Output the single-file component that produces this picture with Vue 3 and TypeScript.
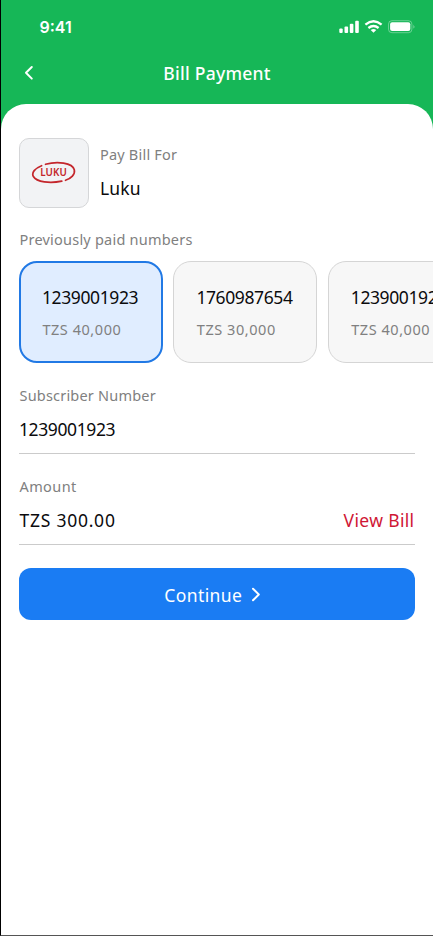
<script setup lang="ts">
interface PaidNumber {
  number: string
  amount: string
}

const paidNumbers: PaidNumber[] = [
  { number: '1239001923', amount: 'TZS 40,000' },
  { number: '1760987654', amount: 'TZS 30,000' },
  { number: '1239001923', amount: 'TZS 40,000' },
]
const selected = 0
</script>

<template>
  <div class="screen">
    <header class="header">
      <div class="status">
        <span class="time">9:41</span>
        <svg class="status-icons" width="78" height="16" viewBox="0 0 78 16" fill="#fff">
          <rect x="0.3" y="9.4" width="3.4" height="4.6" rx="1" />
          <rect x="5.5" y="7.6" width="3.6" height="6.4" rx="1" />
          <rect x="10.8" y="4.8" width="3.6" height="9.2" rx="1" />
          <rect x="16.2" y="1.8" width="3.6" height="12.2" rx="1" />
          <g fill="none" stroke="#fff" stroke-width="2.3">
            <path d="M26.4 5.7Q34.5 -1.1 42.6 5.7" />
            <path d="M29.4 9Q34.5 4.9 39.6 9" />
          </g>
          <path d="M31.7 11Q34.5 9 37.3 11L34.5 13.8Z" />
          <rect x="49.5" y="1.7" width="23.4" height="12" rx="3.4" fill="none" stroke="#fff" stroke-opacity="0.35" />
          <rect x="51.1" y="3.3" width="20.2" height="8.8" rx="2" />
          <path d="M74.5 5.6Q76.3 7.7 74.5 9.8Z" fill-opacity="0.5" />
        </svg>
      </div>
      <div class="nav">
        <svg class="back" width="12" height="16" viewBox="0 0 12 16">
          <path d="M9.8 2L4 7.8L9.8 13.6" fill="none" stroke="#fff" stroke-width="2" stroke-linecap="round" stroke-linejoin="round" />
        </svg>
        <h1 class="title">Bill Payment</h1>
      </div>
    </header>

    <main class="sheet">
      <section class="biller">
        <div class="logo">
          <svg width="46" height="26" viewBox="0 0 46 26">
            <g fill="none" stroke="#c4262c" stroke-width="1.7" stroke-linecap="round">
              <path d="M14.5 4.3C26 1 41.5 2.6 43.3 9.7C44.4 14.4 40 18.5 34.5 20.3" />
              <path d="M10.6 5.7C4 8.3 0.2 12.6 2.4 16.5C5.6 22.2 19 23.6 30.8 21.2" />
            </g>
            <text x="9.3" y="16.4" class="logo-text" textLength="26.5" lengthAdjust="spacingAndGlyphs">LUKU</text>
          </svg>
        </div>
        <div class="biller-text">
          <span class="label pay">Pay Bill For</span>
          <span class="value luku">Luku</span>
        </div>
      </section>

      <span class="label previous">Previously paid numbers</span>
      <div class="cards">
        <button v-for="(item, i) in paidNumbers" :key="i" class="card" :class="{ active: i === selected }">
          <span class="value digits">{{ item.number }}</span>
          <span class="label amount">{{ item.amount }}</span>
        </button>
      </div>

      <section class="field">
        <span class="label subscriber">Subscriber Number</span>
        <div class="field-row"><span class="value digits">1239001923</span></div>
      </section>
      <section class="field">
        <span class="label sum">Amount</span>
        <div class="field-row">
          <span class="value total">TZS 300.00</span>
          <a class="view">View Bill</a>
        </div>
      </section>

      <button class="continue">
        <span>Continue</span>
        <svg width="10" height="16" viewBox="0 0 10 16">
          <path d="M2 1.7L7.8 7.5L2 13.3" fill="none" stroke="#fff" stroke-width="2" stroke-linecap="round" stroke-linejoin="round" />
        </svg>
      </button>
    </main>
  </div>
</template>

<style>
body {
  margin: 0;
}
</style>

<style scoped>
.screen {
  box-sizing: border-box;
  display: flex;
  flex-direction: column;
  width: 433px;
  height: 936px;
  overflow: hidden;
  border-left: 1px solid #000;
  border-bottom: 1px solid #555;
  background: #16b757;
  font-family: 'Noto Sans', sans-serif;
  color: #0b0b0d;
}
.header {
  height: 103.5px;
  flex: none;
  color: #fff;
}
.status {
  display: flex;
  align-items: center;
  justify-content: space-between;
  height: 24px;
  padding: 15px 16px 0 38.5px;
}
.time {
  font: 600 16px/24px Inter, sans-serif;
}
.status-icons {
  display: block;
}
.nav {
  display: grid;
  grid-template-columns: 48px 1fr 48px;
  align-items: center;
  height: 24px;
  margin-top: 22px;
}
.back {
  margin-left: 21px;
}
.title {
  margin: 0;
  text-align: center;
  font-size: 17.5px;
  line-height: 24px;
  font-weight: 500;
  letter-spacing: 0.25px;
  white-space: nowrap;
}
.sheet {
  box-sizing: border-box;
  flex: 1;
  display: flex;
  flex-direction: column;
  padding: 34.5px 18.5px 0 18px;
  background: #fff;
  border-radius: 25px 25px 0 0;
}
.biller {
  display: flex;
  height: 70px;
  gap: 11px;
}
.logo {
  box-sizing: border-box;
  width: 70px;
  height: 70px;
  display: flex;
  align-items: center;
  justify-content: center;
  border: 1px solid #d5d6d8;
  border-radius: 10px;
  background: #f2f3f5;
}
.logo-text {
  font: 600 10px 'Noto Sans', sans-serif;
  fill: #c4262c;
}
.biller-text {
  display: flex;
  flex-direction: column;
  gap: 12px;
  padding-top: 6px;
}
.label {
  font-size: 14.5px;
  line-height: 20px;
  color: #808080;
  white-space: nowrap;
}
.value {
  font-size: 17.5px;
  line-height: 24px;
  white-space: nowrap;
}
.pay {
  letter-spacing: 0.2px;
}
.luku {
  letter-spacing: 0.1px;
}
.digits {
  letter-spacing: -0.4px;
}
.previous {
  margin: 21px 0 0 0.5px;
  letter-spacing: 0.22px;
}
.cards {
  display: flex;
  gap: 10.4px;
  margin: 12px -18.5px 0 0;
  overflow: hidden;
}
.card {
  box-sizing: border-box;
  flex: none;
  display: flex;
  flex-direction: column;
  align-items: flex-start;
  gap: 10px;
  width: 144px;
  height: 102px;
  padding: 23px 0 0 22px;
  border: 1px solid #d5d5d5;
  border-radius: 18px;
  background: #f7f7f7;
  font-family: inherit;
  color: inherit;
}
.card.active {
  padding: 22px 0 0 21px;
  border: 2px solid #2179e5;
  background: #e0edff;
}
.amount {
  margin-left: 0.4px;
  letter-spacing: 0.55px;
}
.field {
  display: flex;
  flex-direction: column;
  height: 91px;
}
.cards + .field {
  margin-top: 22px;
}
.subscriber {
  margin-left: 0.5px;
  letter-spacing: 0.2px;
}
.sum {
  margin-left: 0.5px;
  letter-spacing: 0.4px;
}
.field-row {
  box-sizing: border-box;
  display: flex;
  justify-content: space-between;
  height: 49px;
  padding-top: 12px;
  border-bottom: 1px solid #cbcbcb;
}
.total {
  margin-left: 0.5px;
  letter-spacing: 0.75px;
}
.view {
  font-size: 17.5px;
  line-height: 24px;
  letter-spacing: 0.35px;
  color: #cf1735;
}
.continue {
  display: flex;
  align-items: center;
  justify-content: center;
  flex: none;
  gap: 9px;
  height: 51.5px;
  margin-top: 1px;
  padding: 2px 8px 0 0;
  box-sizing: border-box;
  border: 0;
  border-radius: 12px;
  background: #1a7cf3;
  color: #fff;
  font: 400 17.5px/24px 'Noto Sans', sans-serif;
  letter-spacing: 0.4px;
}
</style>
